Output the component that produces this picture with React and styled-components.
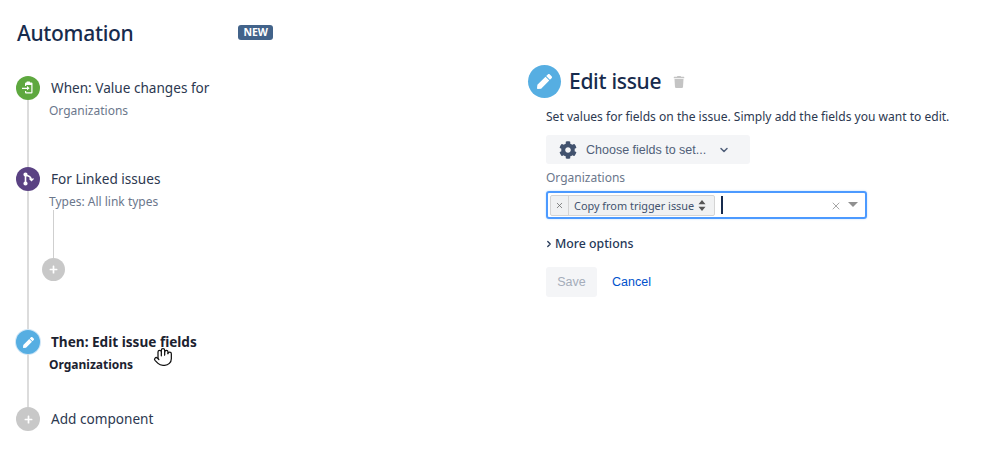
import React from 'react'
import styled, { createGlobalStyle } from 'styled-components'
import { FaPen, FaCog, FaTrash, FaPlus } from 'react-icons/fa'
import { ChevronDown, ChevronRight, Hand, X } from 'lucide-react'

const GlobalStyle = createGlobalStyle`
    html, body { margin: 0; padding: 0; background: #fff; }
    body { font-family: "Noto Sans", "Open Sans", sans-serif; color: #172b4d; width: 998px; height: 472px; overflow: hidden; }
`

const Page = styled.div`
    display: flex;
    width: 998px;
    height: 472px;
    position: relative;
`

const Sidebar = styled.aside`
    width: 528px;
    flex: none;
    padding: 18px 0 0 16px;
    box-sizing: border-box;
`

const Header = styled.div`
    display: flex;
    align-items: flex-start;
    width: 257px;
    justify-content: space-between;
    height: 58px;
`

const Title = styled.h1`
    margin: 0 0 0 1px;
    font-size: 21px;
    letter-spacing: -0.3px;
    line-height: 30px;
    font-weight: 500;
    color: #172b4d;
`

const NewBadge = styled.span`
    margin-top: 7px;
    background: #42638a;
    color: #fff;
    font-size: 10.5px;
    font-weight: 700;
    line-height: 15px;
    height: 15px;
    padding: 0 5px;
    border-radius: 3px;
`

const Step = styled.div`
    display: flex;
    gap: 11px;
    height: ${p => p.$height}px;
`

const Rail = styled.div`
    width: 24px;
    flex: none;
    display: flex;
    flex-direction: column;
    align-items: center;
`

const Line = styled.div`
    flex: 1;
    width: 2px;
    background: #dcdcdc;
`

const Node = styled.div`
    width: 24px;
    height: 24px;
    flex: none;
    border-radius: 50%;
    background: ${p => p.$color};
    color: #fff;
    display: flex;
    align-items: center;
    justify-content: center;
    box-shadow: ${p => p.$active ? '0 0 0 1px #cfe6f7' : 'none'};
`

const StepBody = styled.div`
    flex: 1;
    min-width: 0;
    padding-top: 2px;
`

const StepTitle = styled.div`
    font-size: 13.6px;
    line-height: 20px;
    font-weight: ${p => p.$bold ? 700 : 400};
    color: ${p => p.$bold ? '#1c2230' : '#2c3850'};
`

const StepSub = styled.div`
    font-size: 12px;
    line-height: 18px;
    margin: 4px 0 0 -2px;
    font-weight: ${p => p.$bold ? 700 : 400};
    color: ${p => p.$bold ? '#1c2230' : '#6b778c'};
`

const Branch = styled.div`
    display: flex;
    flex-direction: column;
    align-items: center;
    width: 23px;
    margin: -1px 0 0 -9px;
`

const BranchLine = styled.div`
    width: 1px;
    height: 48px;
    background: #cfcfcf;
`

const BranchNode = styled.div`
    width: 23px;
    height: 23px;
    border-radius: 50%;
    background: #c8c8c8;
    color: #fff;
    display: flex;
    align-items: center;
    justify-content: center;
`

const Panel = styled.main`
    flex: 1;
    padding-top: 65px;
`

const PanelHead = styled.div`
    display: flex;
    align-items: center;
    height: 33px;
`

const PanelIcon = styled.div`
    width: 33px;
    height: 33px;
    border-radius: 50%;
    background: #56aee2;
    color: #fff;
    display: flex;
    align-items: center;
    justify-content: center;
    margin-right: 8px;
`

const PanelTitle = styled.h2`
    margin: 0;
    font-size: 21px;
    letter-spacing: -0.3px;
    line-height: 33px;
    font-weight: 500;
    color: #172b4d;
`

const TrashButton = styled.span`
    color: #c4c4c4;
    display: flex;
    margin-left: 12px;
`

const PanelBody = styled.div`
    padding: 10px 0 0 18px;
    display: flex;
    flex-direction: column;
    align-items: flex-start;
`

const Description = styled.p`
    margin: 0;
    font-size: 12.05px;
    line-height: 18px;
    color: #2c3850;
    white-space: nowrap;
`

const ChooseButton = styled.button`
    margin-top: 9px;
    width: 204px;
    height: 29px;
    border: 0;
    border-radius: 3px;
    background: #f4f5f7;
    color: #505f79;
    display: flex;
    align-items: center;
    padding: 0 0 0 13px;
    font-family: "Liberation Sans", sans-serif;
    font-size: 12.5px;
    svg:first-child { color: #42526e; }
    span { margin: 0 12px 0 9px; }
`

const FieldLabel = styled.label`
    margin-top: 5px;
    font-size: 12px;
    line-height: 18px;
    color: #6b778c;
`

const Field = styled.div`
    margin-top: 4px;
    width: 321px;
    height: 28px;
    box-sizing: border-box;
    border: 2px solid #4c9aff;
    border-radius: 3px;
    box-shadow: 0 0 2px #b5d8fb;
    display: flex;
    align-items: center;
    padding: 0 7px 0 2px;
`

const Chip = styled.div`
    display: flex;
    height: 19px;
    border: 1px solid #d4d4d4;
    border-radius: 2px;
    background: #f0f1f2;
    color: #42526e;
    font-size: 10.9px;
    align-items: center;
`

const ChipRemove = styled.span`
    width: 17px;
    height: 100%;
    display: flex;
    align-items: center;
    justify-content: center;
    color: #666;
    border-right: 1px solid #d4d4d4;
`

const ChipLabel = styled.span`
    padding: 0 8px 0 5px;
    display: flex;
    align-items: center;
    gap: 4px;
    white-space: nowrap;
`

const Sorter = styled.svg`
    display: block;
`

const Caret = styled.div`
    width: 2px;
    height: 18px;
    background: #172b4d;
    margin-left: 6px;
    flex: none;
`

const FieldEnd = styled.div`
    margin-left: auto;
    display: flex;
    align-items: center;
    gap: 6px;
    color: #8a8a8a;
    padding-top: 2px;
`

const Arrow = styled.div`
    width: 0;
    height: 0;
    border-left: 5px solid transparent;
    border-right: 5px solid transparent;
    border-top: 5px solid #909090;
    margin-bottom: 4px;
`

const MoreOptions = styled.div`
    margin: 16px 0 0 -2px;
    display: flex;
    align-items: center;
    gap: 1px;
    font-size: 12.3px;
    line-height: 18px;
    font-weight: 500;
    color: #253858;
`

const Actions = styled.div`
    margin-top: 14px;
    display: flex;
    align-items: center;
    gap: 15px;
    font-family: "Liberation Sans", sans-serif;
`

const SaveButton = styled.button`
    width: 51px;
    height: 30px;
    border: 0;
    border-radius: 3px;
    background: #f4f5f7;
    color: #a5adba;
    font: inherit;
    font-size: 12.5px;
`

const CancelLink = styled.a`
    color: #0052cc;
    font-size: 12.5px;
`

const Cursor = styled.div`
    position: absolute;
    left: 153px;
    top: 347px;
    display: flex;
    svg { display: block; }
`

function EnterIcon() {
    return (
        <svg width="14" height="14" viewBox="0 0 14 14" fill="none">
            <path d="M5 1.5h5.5a1 1 0 0 1 1 1v9a1 1 0 0 1-1 1H5a1 1 0 0 1-1-1V10h1.2v1.3h5.1V4H5.200V5H4V2.500a1 1 0 0 1 1-1z" fill="#fff" />
            <path d="M1 6.700h5V5l2.600 2.200L6 9.300V7.900H1z" fill="#fff" />
            <rect x="5.500" y="0.500" width="3.500" height="1.800" rx="0.500" fill="#fff" />
        </svg>
    )
}

function BranchIcon() {
    return (
        <svg width="14" height="14" viewBox="0 0 14 14" fill="none" stroke="#fff" strokeWidth="1.600">
            <circle cx="4.500" cy="2.500" r="1.300" fill="#fff" />
            <circle cx="4.500" cy="11.500" r="1.300" fill="#fff" />
            <path d="M4.500 3v8" />
            <path d="M4.500 3.500c3.500 0 5.500 1.500 6 4.500" />
            <path d="M8.500 6.500l2 2 2-2" strokeWidth="1.300" />
        </svg>
    )
}

function App() {
    return (
        <Page>
            <GlobalStyle />
            <Sidebar>
                <Header>
                    <Title>Automation</Title>
                    <NewBadge>NEW</NewBadge>
                </Header>

                <Step $height={91}>
                    <Rail>
                        <Node $color="#5ea83f"><EnterIcon /></Node>
                        <Line />
                    </Rail>
                    <StepBody>
                        <StepTitle>When: Value changes for</StepTitle>
                        <StepSub>Organizations</StepSub>
                    </StepBody>
                </Step>

                <Step $height={163}>
                    <Rail>
                        <Node $color="#5a4283"><BranchIcon /></Node>
                        <Line />
                    </Rail>
                    <StepBody>
                        <StepTitle>For Linked issues</StepTitle>
                        <StepSub>Types: All link types</StepSub>
                        <Branch>
                            <BranchLine />
                            <BranchNode><FaPlus size={9} /></BranchNode>
                        </Branch>
                    </StepBody>
                </Step>

                <Step $height={77}>
                    <Rail>
                        <Node $color="#56aee2" $active><FaPen size={11} /></Node>
                        <Line />
                    </Rail>
                    <StepBody>
                        <StepTitle $bold>Then: Edit issue fields</StepTitle>
                        <StepSub $bold>Organizations</StepSub>
                    </StepBody>
                </Step>

                <Step $height={24}>
                    <Rail>
                        <Node $color="#c8c8c8"><FaPlus size={9} /></Node>
                    </Rail>
                    <StepBody>
                        <StepTitle>Add component</StepTitle>
                    </StepBody>
                </Step>
            </Sidebar>

            <Panel>
                <PanelHead>
                    <PanelIcon><FaPen size={15} /></PanelIcon>
                    <PanelTitle>Edit issue</PanelTitle>
                    <TrashButton><FaTrash size={12} /></TrashButton>
                </PanelHead>
                <PanelBody>
                    <Description>Set values for fields on the issue. Simply add the fields you want to edit.</Description>
                    <ChooseButton>
                        <FaCog size={18} />
                        <span>Choose fields to set...</span>
                        <ChevronDown size={12} strokeWidth={3} />
                    </ChooseButton>
                    <FieldLabel>Organizations</FieldLabel>
                    <Field>
                        <Chip>
                            <ChipRemove><X size={9} strokeWidth={2} /></ChipRemove>
                            <ChipLabel>
                                Copy from trigger issue
                                <Sorter width="8" height="11" viewBox="0 0 8 11" fill="#555">
                                    <path d="M4 0l3.500 4.300h-7zM4 11L.5 6.700h7z" />
                                </Sorter>
                            </ChipLabel>
                        </Chip>
                        <Caret />
                        <FieldEnd>
                            <X size={12} strokeWidth={1.500} />
                            <Arrow />
                        </FieldEnd>
                    </Field>
                    <MoreOptions>
                        <ChevronRight size={10} strokeWidth={3} />
                        More options
                    </MoreOptions>
                    <Actions>
                        <SaveButton disabled>Save</SaveButton>
                        <CancelLink>Cancel</CancelLink>
                    </Actions>
                </PanelBody>
            </Panel>

            <Cursor>
                <Hand size={20} fill="#fff" color="#111" strokeWidth={1.500} />
            </Cursor>
        </Page>
    )
}

export default App
